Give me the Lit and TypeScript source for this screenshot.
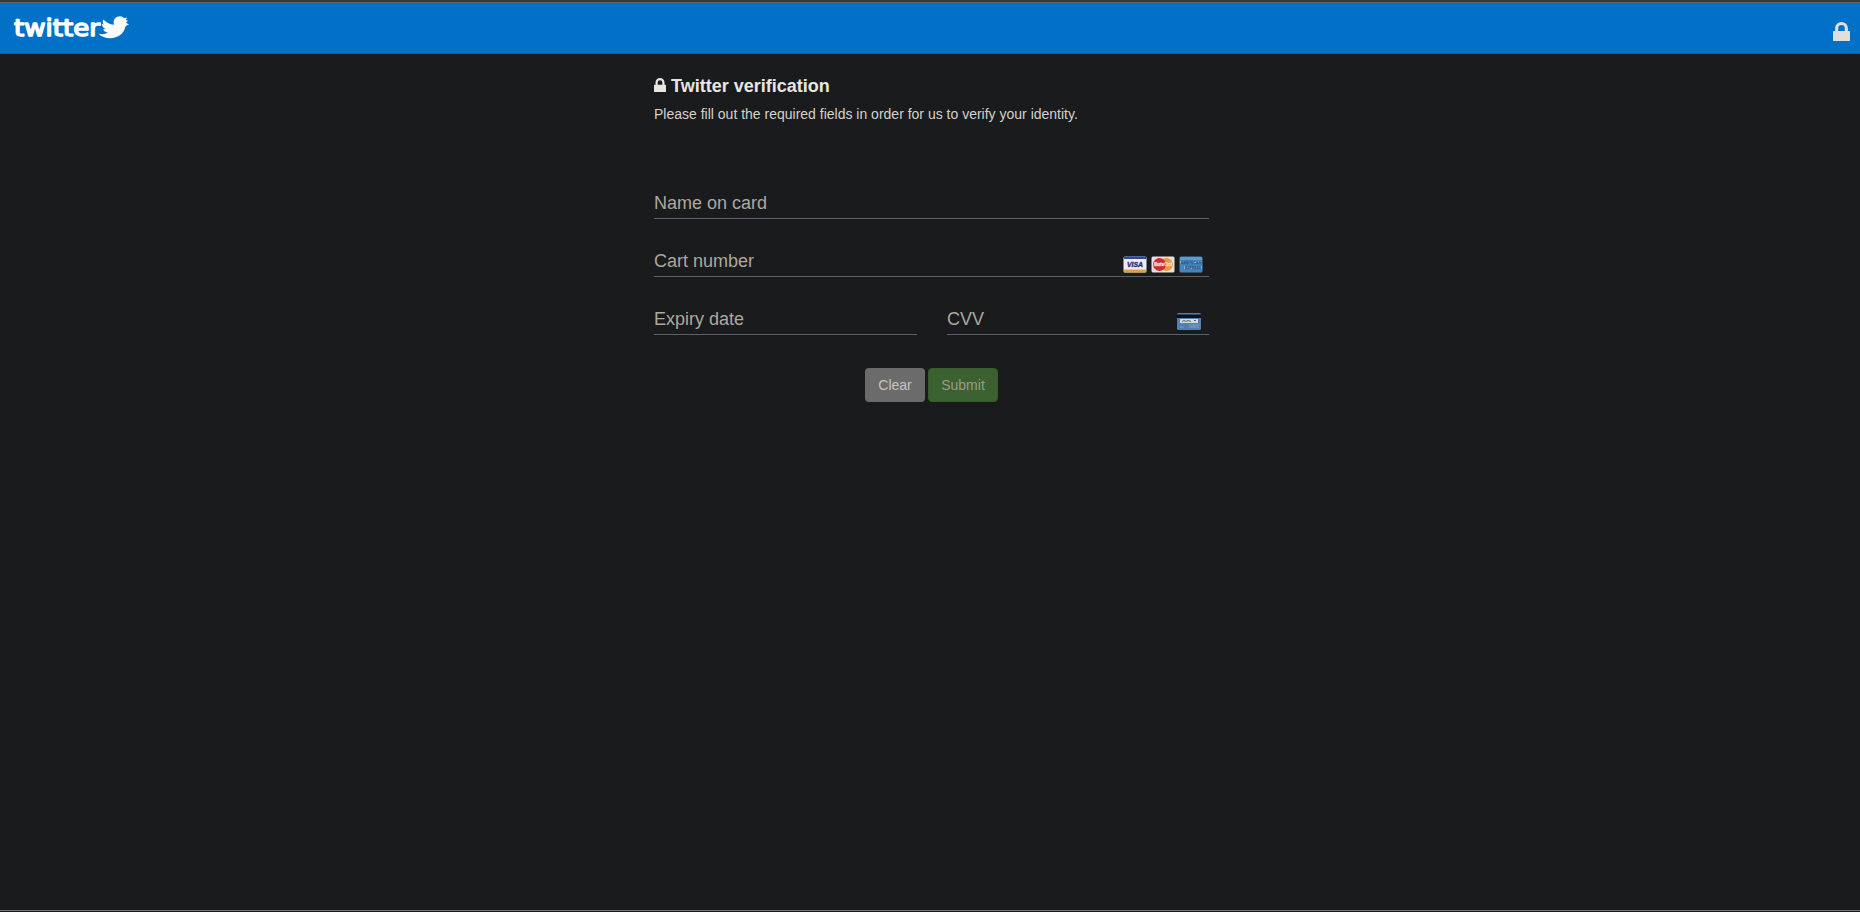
import { LitElement, html, css, svg } from "lit";
import { customElement } from "lit/decorators.js";

const lockShape = svg`<path fill-rule="evenodd" d="M2 9V6a6 6 0 0 1 12 0v3h1.200a.8.8 0 0 1 .8.8v8.400a.8.8 0 0 1-.8.8H.8a.8.8 0 0 1-.8-.8V9.800A.8.8 0 0 1 .8 9zM4.900 9h6.200V6a3.100 3.100 0 0 0-6.200 0z"/>`;

const lock = html`<svg class="lock" viewBox="0 0 16 19" preserveAspectRatio="none">${lockShape}</svg>`;

@customElement("app-root")
export class AppRoot extends LitElement {
  static styles = css`
    :host { display: flex; flex-direction: column; box-sizing: border-box; width: 100%; height: 912px; background: #1a1b1d; color: #e8e6e3; font: 14px/20px "Liberation Sans", Arial, sans-serif; border-top: 2px solid #3b3a39; overflow: hidden; }
    svg { display: block; }
    .bar { box-sizing: border-box; display: flex; justify-content: space-between; height: 52px; background: #0071c6; border-top: 1px solid #5f6468; border-bottom: 1px solid #1c5c90; padding: 10px 10px 0 12px; }
    .logo { width: 120px; height: 28px; fill: #fff; }
    .wordmark { font: 23.500px "DejaVu Sans", sans-serif; stroke: #fff; stroke-width: 1.500; stroke-linejoin: round; }
    .lock { fill: #e8e6e3; }
    .bar .lock { width: 17px; height: 19px; margin-top: 9px; fill: #e2dfdb; }
    main { width: 555px; margin: 0 0 0 654px; flex: 1; }
    .title { display: flex; align-items: flex-start; gap: 5px; margin: 22px 0 0; font-size: 18px; line-height: 20px; font-weight: bold; }
    .title .lock { width: 12px; height: 14px; margin-top: 2px; }
    .intro { margin: 8px 0 0; color: #d5d1cb; }
    .fields { margin-top: 59px; display: grid; grid-template-columns: 263px 262px; column-gap: 30px; row-gap: 22px; }
    .field { box-sizing: border-box; height: 36px; display: flex; justify-content: space-between; border-bottom: 1px solid #5d6163; font-size: 18px; line-height: 40px; color: #aea89f; }
    .wide { grid-column: 1 / -1; }
    .cards { display: flex; gap: 4px; padding: 15px 6px 0 0; }
    .cvv { padding: 14px 8px 0 0; }
    .cards svg { width: 24px; height: 17px; overflow: visible; }
    .buttons { display: flex; justify-content: flex-start; gap: 3px; margin: 33px 0 0 211px; }
    .button { box-sizing: border-box; height: 34px; width: 60px; border-radius: 4px; text-align: center; line-height: 34px; background: #6b6b6b; color: #c8c3bb; }
    .submit { width: 70px; background: #3a612f; color: #989d91; border: 1px solid #365c2c; line-height: 32px; }
    .edge { height: 1px; background: #7d7069; margin-bottom: 1px; }
    .visa { font: italic bold 8px "Liberation Sans", sans-serif; fill: #183274; stroke: #183274; stroke-width: .4; }
    .master { font: italic bold 5px "Liberation Sans", sans-serif; fill: #f6dfd7; stroke: #f6dfd7; stroke-width: .3; }
    .amex { font: bold 4px "Liberation Sans", sans-serif; fill: #245b93; stroke: #245b93; stroke-width: .3; }
  `;

  render() {
    return html`
      <header class="bar">
        <svg class="logo" viewBox="12 13 120 28">
          <text class="wordmark" x="14" y="35.500" textLength="86" lengthAdjust="spacingAndGlyphs">twitter</text>
          <path d="M103.500 19.500C106 22.500 109.500 24.300 114 24.700C112.500 19.500 116 16.300 120 16.300C121.800 16.300 123.300 17.100 124.200 18.300L127 17.500L125.800 20.400L128 20.300L126 22.900L129 24.200L125.500 26.300C124.200 33.500 118 38.200 110 38.200C105.500 38.200 101.300 36.800 98.500 33.800C102.500 34.700 105.500 34.200 108 32.600C105.500 32.200 103.800 31 103.200 29.200L105.600 29.100C103 27.900 101.900 26 102 23.800L104 24.500C102.400 22.900 102.500 21 103.500 19.500z"/>
        </svg>
        ${lock}
      </header>
      <main>
        <h1 class="title">${lock}<span>Twitter verification</span></h1>
        <p class="intro">Please fill out the required fields in order for us to verify your identity.</p>
        <div class="fields">
          <div class="field wide"><span>Name on card</span></div>
          <div class="field wide">
            <span>Cart number</span>
            <div class="cards">
              <svg viewBox="0 0 24 17">
                <rect x=".5" y=".5" width="23" height="16" rx="1.500" fill="#eceef2"/>
                <path d="M1 .5h22v2.500H1z" fill="#2c4a96"/>
                <path d="M1 13.500h22v2q0 1-1 1H2q-1 0-1-1z" fill="#dfa13c"/>
                <text class="visa" x="4" y="11.200" textLength="16" lengthAdjust="spacingAndGlyphs">VISA</text>
              </svg>
              <svg viewBox="0 0 24 17">
                <rect x=".5" y=".5" width="23" height="16" rx="1.500" fill="#e4e2e1"/>
                <circle cx="15.500" cy="8.500" r="6.500" fill="#ed9b35"/><circle cx="8.500" cy="8.500" r="6.500" fill="#cb2d33"/>
                <text class="master" x="3" y="10.300" textLength="18" lengthAdjust="spacingAndGlyphs">MasterCard</text>
              </svg>
              <svg viewBox="0 0 24 17">
                <rect x=".5" y=".5" width="23" height="16" rx="1.500" fill="#4686bd"/>
                <path d="M1 1h22v3H1z" fill="#5d9dcb"/>
                <path d="M1 5h22v3H1zM5 10h18v3H5z" fill="#8fbcdb"/>
                <text class="amex" x="1.500" y="8" textLength="21" lengthAdjust="spacingAndGlyphs">AMERICAN</text>
                <text class="amex" x="6" y="13" textLength="16" lengthAdjust="spacingAndGlyphs">EXPRESS</text>
              </svg>
            </div>
          </div>
          <div class="field"><span>Expiry date</span></div>
          <div class="field">
            <span>CVV</span>
            <div class="cards cvv">
              <svg viewBox="0 0 24 17">
                <rect y="0" width="24" height="17" rx="1.500" fill="#527fae"/>
                <path d="M0 1.500h24V5H0z" fill="#0b1220"/>
                <path d="M3 6h18v4H3z" fill="#d5d9d9"/>
                <path d="M5 8.500l2-1 2 1 2-1 3 1m3-1h2" fill="none" stroke="#5c6470"/>
                <path d="M12 12h10M3 14h4m5 0h10" stroke="#84abd0" stroke-width=".8"/>
              </svg>
            </div>
          </div>
        </div>
        <div class="buttons"><span class="button">Clear</span><span class="button submit">Submit</span></div>
      </main>
      <div class="edge"></div>
    `;
  }
}
